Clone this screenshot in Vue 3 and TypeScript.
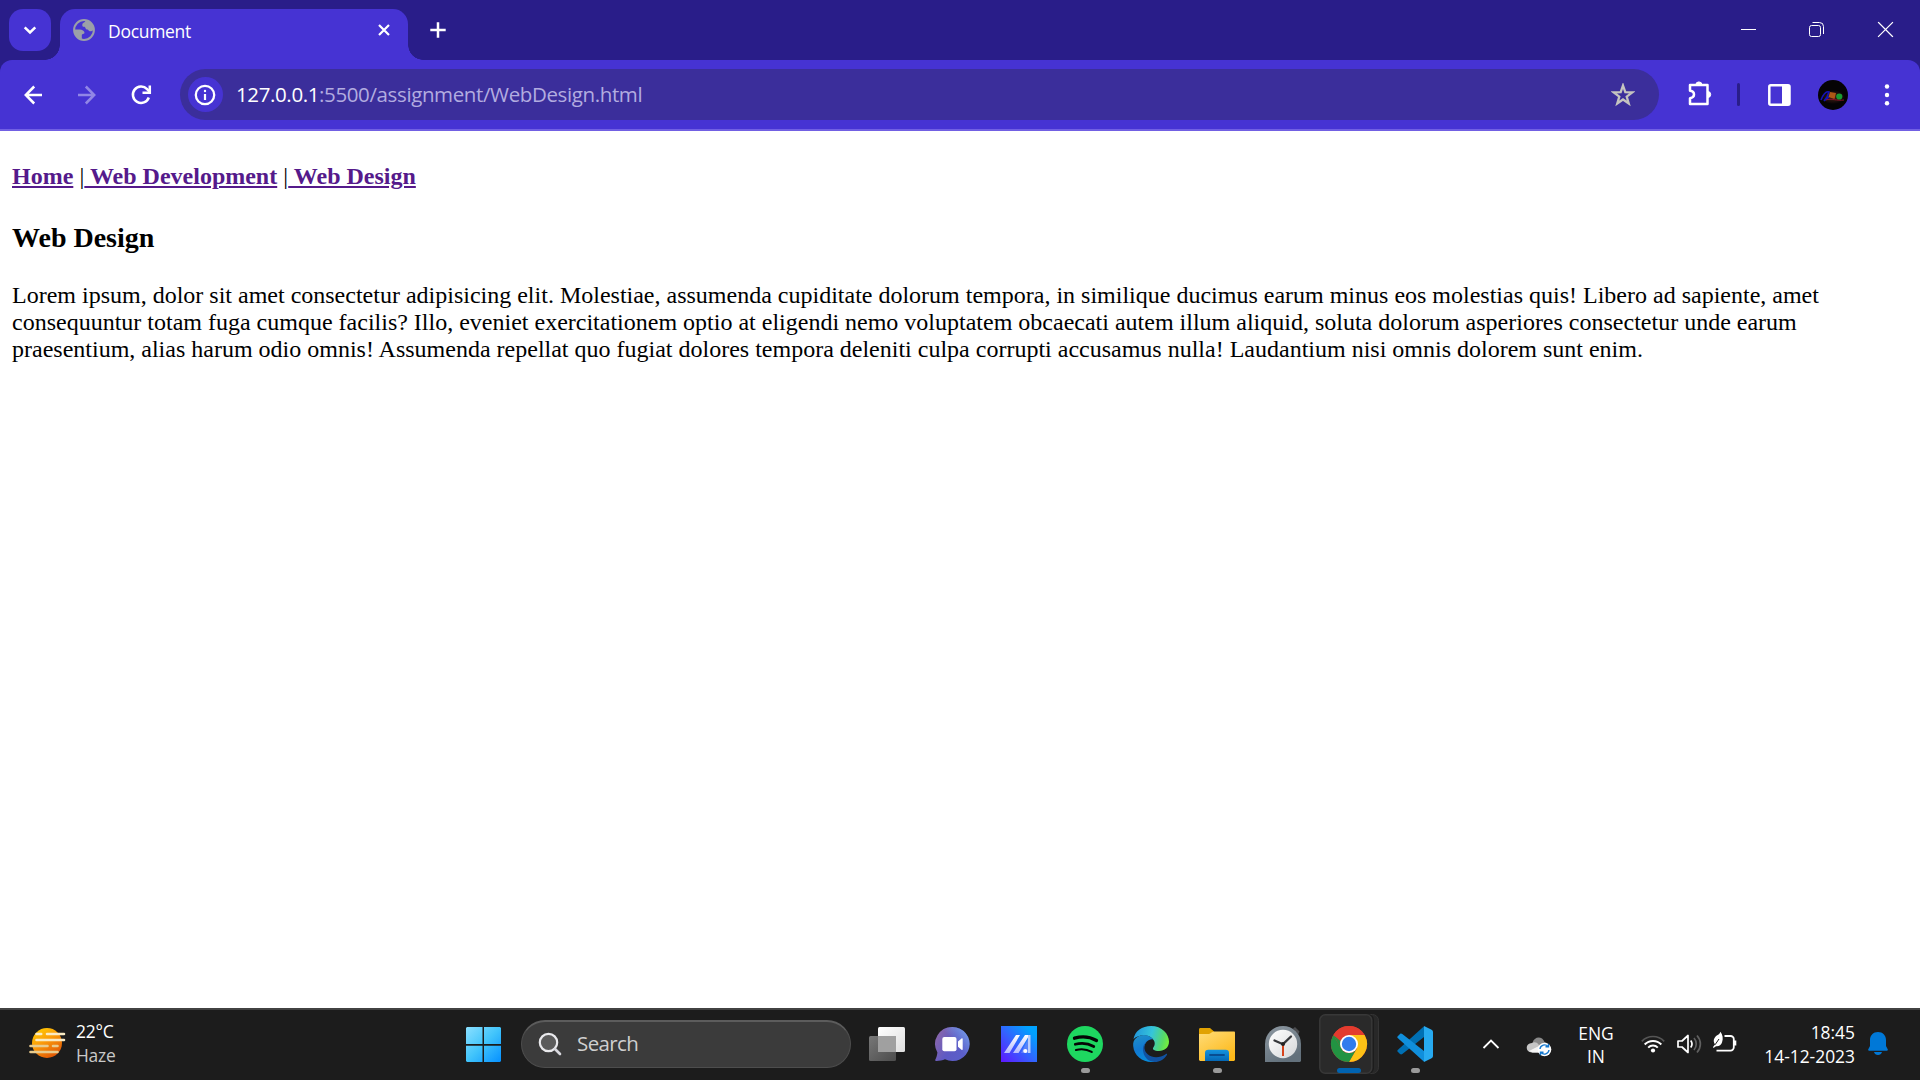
<script setup lang="ts">
interface NavLink {
  lead: string
  label: string
}

const links: NavLink[] = [
  { lead: '', label: 'Home' },
  { lead: ' |', label: ' Web Development' },
  { lead: ' |', label: ' Web Design' },
]

const paragraph: string[] = [
  'Lorem ipsum, dolor sit amet consectetur adipisicing elit. Molestiae, assumenda cupiditate dolorum tempora, in similique ducimus earum minus eos molestias quis! Libero ad sapiente, amet',
  'consequuntur totam fuga cumque facilis? Illo, eveniet exercitationem optio at eligendi nemo voluptatem obcaecati autem illum aliquid, soluta dolorum asperiores consectetur unde earum',
  'praesentium, alias harum odio omnis! Assumenda repellat quo fugiat dolores tempora deleniti culpa corrupti accusamus nulla! Laudantium nisi omnis dolorem sunt enim.',
]
</script>

<template>
  <div class="screen">
    <header class="tabstrip">
      <button class="tab-search" aria-label="Search tabs">
        <svg width="42" height="42" viewBox="0 0 42 42"><path d="M15.7 18.3 21 23.5l5.3-5.2" fill="none" stroke="#fff" stroke-width="2.5" /></svg>
      </button>
      <div class="tab">
        <svg class="globe" width="22" height="22" viewBox="0 0 22 22"><circle cx="11" cy="11" r="9.900" fill="none" stroke="#9b9fa8" stroke-width="2" /><path fill="#9b9fa8" d="M12.500 1.500C12.300 3.800 9.500 3.300 9.300 5.700c-.1 1.500.3 2 1.700 2 1.800 0 1.200 2.700 2.800 2.700 2.200.1 1.700 1.900 3.500 1.900 1.200 0 2-.8 3.700-.8C21 6 18 1.800 12.500 1.500zM1.200 10.500h5.600c2.300 0 4.700 1.300 4.700 3.200 0 1.300-2.700.9-2.700 2.600v3.900C4.500 19.800 1.200 15.500 1.200 10.500z" /></svg>
        <span class="tab-title">Document</span>
        <svg class="tab-close" width="14" height="14" viewBox="0 0 14 14"><path d="M2 2l10 10M12 2 2 12" stroke="#fff" stroke-width="2.200" /></svg>
      </div>
      <svg class="plus" width="18" height="18" viewBox="0 0 18 18"><path d="M9 1.300v15.400M1.300 9h15.400" stroke="#fff" stroke-width="2.500" /></svg>
      <div class="window-controls">
        <svg width="69" height="60" viewBox="0 0 69 60"><path d="M28 29.500h15" stroke="#fff" /></svg>
        <svg width="69" height="60" viewBox="0 0 69 60" fill="none" stroke="#fff"><rect x="27.500" y="25.500" width="11" height="11" rx="2" /><path d="M30.500 22.500h7a4 4 0 0 1 4 4v7.500" /></svg>
        <svg width="69" height="60" viewBox="0 0 69 60"><path d="M27.500 22.500l14 14M41.500 22.500l-14 14" stroke="#fff" stroke-width="1.200" stroke-linecap="square" /></svg>
      </div>
    </header>

    <div class="toolbar-wrap">
      <div class="toolbar">
        <svg class="nav-icon" width="54" height="54" viewBox="0 0 54 54" fill="none" stroke="#fff" stroke-width="2.500"><path d="M36 27H20.500M28.200 18.500l-8.400 8.500 8.400 8.500" /></svg>
        <svg class="nav-icon" width="54" height="54" viewBox="0 0 54 54" fill="none" stroke="#9186e6" stroke-width="2.500"><path d="M18 27h15.500M25.800 18.500l8.400 8.500-8.400 8.500" /></svg>
        <svg class="nav-icon" width="54" height="54" viewBox="0 0 54 54" fill="none" stroke="#fff" stroke-width="2.500"><path d="M34.800 29.500a8.200 8.200 0 1 1-1.700-8.400l2.400 2.600" /><path d="M35.800 17.500v7.200h-7.300" /></svg>
        <div class="omnibox">
          <div class="site-info">
            <svg width="22" height="22" viewBox="0 0 22 22"><circle cx="11" cy="11" r="9.200" fill="none" stroke="#fff" stroke-width="2.300" /><path d="M11 10v6" stroke="#fff" stroke-width="2.200" /><circle cx="11" cy="7" r="1.200" fill="#fff" /></svg>
          </div>
          <span class="url"><b>127.0.0.1</b>:5500/assignment/WebDesign.html</span>
          <svg class="star" width="24" height="24" viewBox="0 0 24 24"><path d="M12 2.500l2.300 6.700 7 .1-5.600 4.300 2 6.900L12 16.500l-5.700 4 2-6.900-5.600-4.300 7-.1z" fill="none" stroke="#c5c4c0" stroke-width="2.300" /></svg>
        </div>
        <svg class="puzzle" width="28" height="28" viewBox="0 0 28 28"><path d="M5 5h17.500v19H5v-5.800c3-.4 4-1.900 4-3.700s-1-3.300-4-3.700z" fill="none" stroke="#fff" stroke-width="2.500" stroke-linejoin="round" /><path d="M10.800 5a3.100 3.100 0 0 1 6.200 0zM22.700 11.500a3 3 0 0 1 0 6z" fill="#fff" stroke="#fff" /></svg>
        <i class="divider"></i>
        <svg class="panel" width="23" height="22" viewBox="0 0 23 22"><rect x="1.300" y="1.300" width="20.200" height="19.400" rx="1.500" fill="none" stroke="#fff" stroke-width="2.500" /><path d="M14 1.500h7.500v19H14z" fill="#fff" /></svg>
        <svg class="avatar" width="30" height="30" viewBox="0 0 30 30">
          <defs><radialGradient id="glow"><stop offset="0" stop-color="#4a2215" /><stop offset="1" stop-color="#050305" /></radialGradient></defs>
          <circle cx="15" cy="15" r="15" fill="#050305" /><ellipse cx="15" cy="17" rx="12" ry="7" fill="url(#glow)" />
          <path d="M3 20c2-5 5-9 8-8l-2 5-3 4M6 21l5-4" fill="none" stroke="#1313b8" stroke-width="1.600" /><path d="M12 12l6 1-1.500 6-6-2z" fill="#ad5816" /><path d="M8 20c5-2 11 1 18 0" fill="none" stroke="#8c142a" /><circle cx="21.300" cy="16.500" r="3.100" fill="#189c32" />
        </svg>
        <svg class="dots" width="6" height="24" viewBox="0 0 6 24" fill="#fff"><circle cx="3" cy="3.500" r="2.200" /><circle cx="3" cy="12" r="2.200" /><circle cx="3" cy="20.300" r="2.200" /></svg>
      </div>
    </div>

    <main class="page">
      <h4><template v-for="link in links" :key="link.label"><span class="bar">{{ link.lead }}</span><a>{{ link.label }}</a></template></h4>
      <h3>Web Design</h3>
      <p><span v-for="line in paragraph" :key="line">{{ line }}</span></p>
    </main>

    <footer class="taskbar">
      <div class="weather">
        <svg width="38" height="32" viewBox="0 0 38 32">
          <defs><linearGradient id="sun" x1="0" y1="0" x2=".6" y2="1"><stop offset="0" stop-color="#ffd400" /><stop offset=".5" stop-color="#fb9d0a" /><stop offset="1" stop-color="#e25a05" /></linearGradient></defs>
          <circle cx="19" cy="16" r="15" fill="url(#sun)" />
          <g stroke-width="2.600" stroke-linecap="round"><path d="M8.500 7h4.700M19 7h17M8.500 13h27.500" stroke="#f9ebc4" /><path d="M2.500 19h17M25 19h4.500M2.500 25h27" stroke="#e8cb8d" /></g>
        </svg>
        <div class="weather-text"><span>22°C</span><span class="dim">Haze</span></div>
      </div>

      <div class="apps">
        <svg class="slot" viewBox="0 0 66 72">
          <defs><linearGradient id="win" gradientUnits="userSpaceOnUse" x1="16" y1="19" x2="51" y2="54"><stop offset="0" stop-color="#8be0ff" /><stop offset=".5" stop-color="#41c4fb" /><stop offset="1" stop-color="#0590ff" /></linearGradient></defs>
          <path fill="url(#win)" d="M17 19h15.500v17H16V20zM34 19h16l1 1v16H34zM16 37.800h16.500V54H17l-1-1zM34 37.800h17V53l-1 1H34z" />
        </svg>
        <div class="search">
          <svg width="24" height="24" viewBox="0 0 24 24"><circle cx="10.500" cy="10.500" r="8.700" fill="#5b5b5b" stroke="#e9e9ec" stroke-width="2.200" /><path d="M17 17l5 5" stroke="#d8d8de" stroke-width="2.600" stroke-linecap="round" /></svg>
          <span>Search</span>
        </div>
        <svg class="slot" viewBox="0 0 66 72">
          <defs><linearGradient id="tv" x2="1" y2="1"><stop offset="0" stop-color="#fff" /><stop offset="1" stop-color="#dedede" /></linearGradient><linearGradient id="tb" x2="1" y2="1"><stop offset="0" stop-color="#777" /><stop offset="1" stop-color="#4c4c4c" /></linearGradient></defs>
          <rect x="15" y="28" width="27" height="25" rx="1.500" fill="url(#tb)" /><rect x="24" y="19" width="27" height="25" rx="1.500" fill="url(#tv)" /><path d="M24 28h18v16H24z" fill="#a0a0a0" />
        </svg>
        <svg class="slot" viewBox="0 0 66 72">
          <defs><linearGradient id="chat" x1="0" y1=".2" x2="1" y2=".7"><stop offset="0" stop-color="#8d67a8" /><stop offset=".5" stop-color="#5e5ac4" /><stop offset="1" stop-color="#5a60cb" /></linearGradient><linearGradient id="chat2" x1=".3" y1=".6" x2="1" y2="0"><stop offset=".3" stop-color="#78a9ef" stop-opacity="0" /><stop offset="1" stop-color="#78a9ef" /></linearGradient></defs>
          <path d="M32.500 19a17 17 0 1 1-7.500 32.200c-2.500 1-6 1.800-9 1.700-.8 0-1-.7-.6-1.400 1-2 1.800-4.500 2-7A17 17 0 0 1 32.500 19z" fill="url(#chat)" /><path d="M32.500 19a17 17 0 1 1-7.500 32.200A17 17 0 0 1 32.500 19z" fill="url(#chat2)" />
          <rect x="22.300" y="29" width="14.200" height="14.200" rx="2" fill="#fff" /><path d="M38 33.500l3.500-3c.6-.5 1.200-.3 1.200.5v10.300c0 .8-.6 1-1.200.5l-3.500-3z" fill="#fff" />
        </svg>
        <svg class="slot" viewBox="0 0 66 72">
          <defs><linearGradient id="asus" x1="0" y1="1" x2="1" y2="0"><stop offset="0" stop-color="#5f16ff" /><stop offset=".45" stop-color="#3560ff" /><stop offset=".85" stop-color="#00a2ff" /></linearGradient><linearGradient id="bar" x2="0" y2="1"><stop offset="0" stop-color="#fff" /><stop offset="1" stop-color="#b5b9ff" /></linearGradient></defs>
          <path d="M15 18h36v36H15z" fill="url(#asus)" /><path d="M30 27h4L23.500 45H18zM39 27h4.500L32.500 45H27z" fill="url(#bar)" /><path d="M42 27h2.500v18H42z" fill="#b9cdfd" /><path d="M42 31v14h-7z" fill="#6d89f8" opacity=".7" /><circle cx="39.300" cy="43" r="2.100" fill="#fff" />
        </svg>
        <svg class="slot" viewBox="0 0 66 72">
          <circle cx="33" cy="36" r="18" fill="#1ed760" /><g fill="none" stroke="#050505" stroke-linecap="round"><path d="M22.500 30.200c7.500-2.200 15.500-1.400 22 2.300" stroke-width="3.300" /><path d="M23.300 36.300c6.500-1.800 13-.9 18.500 2.200" stroke-width="2.700" /><path d="M24 42c5.500-1.400 11-.7 15.700 1.900" stroke-width="2.200" /></g>
          <rect x="29" y="60" width="9" height="5" rx="2.500" fill="#9a9a9a" />
        </svg>
        <svg class="slot" viewBox="0 0 66 72">
          <defs><linearGradient id="eg1" x1="0" y1=".3" x2="1" y2=".5"><stop offset="0" stop-color="#2196dd" /><stop offset=".5" stop-color="#36c5d9" /><stop offset=".85" stop-color="#57da66" /><stop offset="1" stop-color="#72ec40" /></linearGradient><linearGradient id="eg2" x1=".2" y1="0" x2=".5" y2="1"><stop offset="0" stop-color="#1f8fc9" /><stop offset=".5" stop-color="#1279d1" /><stop offset="1" stop-color="#078cdc" /></linearGradient></defs>
          <path d="M15.500 31C17 23 24 18 33 18c11 0 18 8 18 15.500 0 6-4.500 9.500-10 9.500-5 0-7-1.800-5.700-3.500 2-2.500 2.200-6-1-9-4.500-4.200-13-4.500-18.800.5z" fill="url(#eg1)" />
          <path d="M15.200 38c-1-10 11-14 18-8.500 1.500 1.200 2 2 2 2-4-1-9.200 3-9.200 9 0 6.500 5 12.500 12 13-11 2.500-22-4.500-22.800-15.500z" fill="url(#eg2)" />
          <path d="M28.500 34c-3 3-3 9 1.500 12.500 5 4 12 3.500 18-.5.800-.5 1.300.1.900.9C45.500 52.500 39 55 34 53.500 27.500 52.500 24.500 45 25 40c.3-2.800 1.800-4.800 3.500-6z" fill="#1152a1" />
        </svg>
        <svg class="slot" viewBox="0 0 66 72">
          <defs><linearGradient id="fold" x2=".7" y2="1"><stop offset="0" stop-color="#ffdc78" /><stop offset="1" stop-color="#fdb91a" /></linearGradient><linearGradient id="pocket" x2="0" y2="1"><stop offset="0" stop-color="#1594df" /><stop offset="1" stop-color="#0568b6" /></linearGradient></defs>
          <path d="M15 21.500c0-1 .6-1.500 1.500-1.500H26l4 3.500V30H15z" fill="#e1a202" /><path d="M15 26h10c1.500 0 2.500-2.500 5-2.500h20c.6 0 1 .5 1 1V52l-1 1H16l-1-1z" fill="url(#fold)" /><path d="M21 53v-8a3.300 3.300 0 0 1 3.300-3.300h17.400A3.300 3.300 0 0 1 45 45v8z" fill="url(#pocket)" /><path d="M26 47h14" stroke="#084d91" stroke-width="1.800" stroke-linecap="round" />
          <rect x="29" y="60" width="9" height="5" rx="2.500" fill="#9a9a9a" />
        </svg>
        <svg class="slot" viewBox="0 0 66 72">
          <defs><linearGradient id="dial" x2="1" y2="1"><stop offset="0" stop-color="#fff" /><stop offset="1" stop-color="#d5d7d9" /></linearGradient><linearGradient id="case" x2=".5" y2="1"><stop offset="0" stop-color="#8e99a2" /><stop offset="1" stop-color="#63717c" /></linearGradient></defs>
          <path d="M43 20.500l2-1.500 4.500 4.500-1.200 3z" fill="#4b4c4f" /><path d="M15 54V36a18 18 0 0 1 36 0v17l-1 1z" fill="url(#case)" /><circle cx="33" cy="36" r="14.200" fill="url(#dial)" /><path d="M24.500 32.500l8.500 3.700 8-7.700" fill="none" stroke="#36383b" stroke-width="2.300" stroke-linecap="round" /><path d="M33 36v12" stroke="#d7431b" stroke-width="2" /><circle cx="33" cy="36" r="2" fill="#222" />
        </svg>
        <svg class="slot" viewBox="0 0 66 72">
          <rect x="20" y="6.500" width="42.500" height="59" rx="6" fill="#282828" stroke="#343434" /><rect x="3" y="6" width="55" height="60" rx="6" fill="#1c1c1c" /><rect x="3.800" y="6.800" width="52" height="58.500" rx="5.500" fill="#2a2a2a" stroke="#383838" stroke-width="1.500" />
          <circle cx="33" cy="36" r="18" fill="#e33b2e" /><path d="M33 27h15.600A18 18 0 0 1 33 54l7.800-13.500z" fill="#fdc116" /><path d="M17.410 27A18 18 0 0 0 33 54l7.800-13.500A9 9 0 0 1 25.200 40.500z" fill="#229342" /><path d="M17.410 27l7.790 13.500L33 36z" fill="#229342" /><path d="M17.410 27A18 18 0 0 1 48.590 27H33a9 9 0 0 0-8.500 6z" fill="#e33b2e" /><circle cx="33" cy="36" r="9" fill="#fff" /><circle cx="33" cy="36" r="7.200" fill="#317bed" />
          <rect x="21" y="60" width="24" height="5" rx="2.500" fill="#0063b1" />
        </svg>
        <svg class="slot" viewBox="0 0 66 72">
          <path d="M42 18.300L16 41.800c-.9.800-.9 1.500 0 2.300l2 1.800c.8.700 1.500.6 2.300 0L42 29z" fill="#0070b4" /><path d="M42 53.700L16 30.200c-.9-.8-.9-1.500 0-2.300l2-1.800c.8-.7 1.500-.6 2.300 0L42 43z" fill="#108fdc" /><path d="M42 18l7.100 3.500c1.200.5 1.900 1.200 1.900 2.700v23.600c0 1.500-.7 2.200-1.900 2.700L42 54z" fill="#27aaf0" />
          <rect x="29" y="60" width="9" height="5" rx="2.500" fill="#9a9a9a" />
        </svg>
      </div>

      <div class="tray">
        <svg width="18" height="12" viewBox="0 0 18 12"><path d="M1.500 10 9 2.500l7.500 7.500" fill="none" stroke="#fff" stroke-width="1.800" /></svg>
        <svg class="cloud" width="26" height="22" viewBox="0 0 26 22">
          <path d="M6.500 8C8 1.500 16 .5 18.500 7c2.500.5 4.500 3 4.500 6H9z" fill="#8a8a8a" /><path d="M6 17.500C-1 17.500-1 8.200 6 8c2.500-1.500 5-.5 6.500 1.500L21 17.500z" fill="#c6c6c6" /><path d="M3 16l10-5 5 6.500H6.500z" fill="#f5f5f5" />
          <circle cx="18.500" cy="14.500" r="6.800" fill="#fff" /><path d="M14 14a4.600 4.600 0 0 1 8-2.500M23 15a4.600 4.600 0 0 1-8 2.500M22.500 8.800v3h-3M14.500 20.200v-3h3" fill="none" stroke="#1478cf" stroke-width="1.400" />
        </svg>
        <div class="lang"><span>ENG</span><span>IN</span></div>
        <svg class="wifi" width="24" height="20" viewBox="0 0 24 20" fill="none" stroke-width="1.700"><path d="M.8 7.300a15.500 15.500 0 0 1 22.400 0" stroke="#555" /><path d="M3.700 10.500a11.500 11.500 0 0 1 16.600 0M7.200 13.600a6.800 6.800 0 0 1 9.600 0" stroke="#fff" stroke-width="2" /><circle cx="12" cy="16.500" r="2.100" fill="#fff" /></svg>
        <svg class="sound" width="25" height="22" viewBox="0 0 25 22" fill="none" stroke="#fff" stroke-width="1.700" stroke-linejoin="round"><path d="M1 8h4l6-5.500v17L5 14H1z" /><path d="M13.700 7.500c1.500 2 1.500 5 0 7" /><path d="M17 5c3 3.500 3 8.500 0 12M20 2.500c4.500 5 4.500 12 0 17" stroke="#606060" /></svg>
        <svg class="battery" width="26" height="22" viewBox="0 0 26 22"><path d="M12.500 5h6A3.300 3.300 0 0 1 21.800 8.300v8a3.300 3.300 0 0 1-3.300 3.300H4.500" fill="none" stroke="#fff" stroke-width="1.800" /><path d="M22 9.500h2.300v5H22z" fill="#fff" /><path d="M8.500.8c2.200 3 3 6.800 1.500 10.700-.8 2.500-3.300 4.200-6 3.700L1.500 17 1 16l2-2.500C0 9 3 5 6.500 3.500c1-.5 1.500-1.500 2-2.700z" fill="#fff" /><path d="M3 13.800 7 8" stroke="#1c1c1c" /></svg>
        <div class="clock"><span>18:45</span><span>14-12-2023</span></div>
        <svg class="bell" width="20" height="24" viewBox="0 0 20 24" fill="#0078d7"><path d="M10 0c4.700 0 8 3.500 8 8v6l1.700 3.200c.4.900 0 1.500-.9 1.500H1.200c-.9 0-1.300-.6-.9-1.500L2 14V8c0-4.500 3.300-8 8-8zM6 20h8c-.5 1.800-2 3-4 3s-3.500-1.200-4-3z" /></svg>
      </div>
    </footer>
  </div>
</template>

<style>
body {
  margin: 0;
  overflow: hidden;
}
</style>

<style scoped>
.screen {
  width: 1920px;
  height: 1080px;
  display: flex;
  flex-direction: column;
  background: #fff;
  font-family: "Open Sans", "Noto Sans", sans-serif;
  overflow: hidden;
}
svg {
  display: block;
  flex: none;
}
.tabstrip {
  height: 60px;
  flex: none;
  display: flex;
  align-items: flex-start;
  background: #291d89;
}
.tab-search {
  width: 42px;
  height: 42px;
  margin: 9px 9px 0;
  padding: 0;
  border: 0;
  border-radius: 14px;
  background: #4633d3;
}
.tab {
  position: relative;
  box-sizing: border-box;
  width: 348px;
  height: 51px;
  margin-top: 9px;
  padding: 0 17px 9px 13px;
  display: flex;
  align-items: center;
  border-radius: 15px 15px 0 0;
  background: #4633d3;
  color: #fff;
}
.tab::before,
.tab::after {
  content: "";
  position: absolute;
  bottom: 0;
  width: 15px;
  height: 15px;
}
.tab::before {
  right: 100%;
  background: radial-gradient(circle at 0 0, transparent 14.5px, #4633d3 15px);
}
.tab::after {
  left: 100%;
  background: radial-gradient(circle at 100% 0, transparent 14.5px, #4633d3 15px);
}
.tab-title {
  margin: 1px 0 0 13px;
  font-size: 17.5px;
  letter-spacing: -0.3px;
  line-height: 24px;
}
.tab-close {
  margin-left: auto;
}
.plus {
  margin: 21px 0 0 21px;
}
.window-controls {
  display: flex;
  margin-left: auto;
}
.toolbar-wrap {
  height: 71px;
  flex: none;
  background: #291d89;
}
.toolbar {
  box-sizing: border-box;
  height: 71px;
  padding: 0 30px 0 6px;
  display: flex;
  align-items: center;
  border-bottom: 2px solid #7160e3;
  border-radius: 12px 12px 0 0;
  background: #4633d3;
}
.omnibox {
  box-sizing: border-box;
  width: 1479px;
  height: 51px;
  margin-left: 12px;
  padding: 0 24px 0 8px;
  display: flex;
  align-items: center;
  border-radius: 26px;
  background: #3b2e9b;
}
.site-info {
  width: 35px;
  height: 35px;
  display: flex;
  align-items: center;
  justify-content: center;
  border-radius: 50%;
  background: #4633d3;
}
.site-info svg {
  margin-left: -1px;
}
.url {
  margin: -2px 0 0 13px;
  font-size: 20.5px;
  letter-spacing: -0.38px;
  line-height: 28px;
  color: #b2ace0;
  white-space: nowrap;
}
.url b {
  font-weight: 400;
  color: #fff;
}
.star {
  margin-left: auto;
}
.puzzle {
  margin: -2px 0 0 26px;
}
.divider {
  width: 3px;
  height: 23px;
  margin-left: 24px;
  border-radius: 2px;
  background: #291d89;
}
.panel {
  margin-left: 28px;
}
.avatar {
  margin-left: 27px;
}
.dots {
  margin-left: auto;
}
.page {
  flex: 1;
  padding: 32px 12px 0;
  font-family: "Liberation Serif", "Times New Roman", serif;
  font-size: 24px;
  line-height: 27px;
  color: #000;
}
.page h4 {
  margin: 0 0 32px;
  font-size: 24px;
  font-weight: 700;
  white-space: pre;
}
.page h4 a {
  color: #551a8b;
  text-decoration: underline;
}
.page h4 .bar {
  font-weight: 400;
  letter-spacing: 0.1px;
}
.page h3 {
  margin: 0 0 28px;
  font-size: 28px;
  line-height: 32px;
}
.page p {
  margin: 0;
}
.page p span {
  display: block;
  white-space: nowrap;
}
.taskbar {
  position: relative;
  box-sizing: border-box;
  height: 72px;
  flex: none;
  display: flex;
  justify-content: space-between;
  background: #1c1c1c;
  box-shadow: inset 0 2px #424242;
  color: #fff;
  font-size: 17.4px;
}
.weather {
  width: 450px;
  display: flex;
  align-items: flex-start;
}
.weather svg {
  margin: 19px 0 0 28px;
}
.weather-text,
.lang,
.clock {
  display: flex;
  flex-direction: column;
  line-height: 24px;
}
.weather-text {
  margin: 11px 0 0 10px;
  letter-spacing: -0.2px;
}
.dim {
  color: #c9c9c9;
}
.apps {
  display: flex;
  align-items: center;
  flex: 1;
}
.slot {
  width: 66px;
  height: 72px;
}
.search {
  box-sizing: border-box;
  width: 330px;
  height: 48px;
  margin: 0 3px 0 5px;
  padding: 0 16px;
  display: flex;
  align-items: center;
  border: 1px solid #4d4d4d;
  border-top: 2px solid #5c5c5c;
  border-radius: 24px;
  background: #3b3b3b;
  color: #cfcfcf;
  font-size: 20.5px;
  letter-spacing: -0.6px;
}
.search svg {
  margin-top: -1px;
}
.search span {
  margin: -3px 0 0 15px;
}
.tray {
  width: 438px;
  display: flex;
  align-items: center;
}
.cloud {
  margin: 4px 0 0 26px;
}
.lang {
  width: 50px;
  margin: 1px 0 0 19px;
  align-items: center;
  line-height: 23px;
}
.wifi {
  margin-left: 20px;
}
.sound {
  margin-left: 12px;
}
.battery {
  margin: -4px 0 0 10px;
}
.clock {
  width: 105px;
  margin: -1px 0 0 12px;
  align-items: flex-end;
}
.bell {
  margin-left: 13px;
}
</style>
